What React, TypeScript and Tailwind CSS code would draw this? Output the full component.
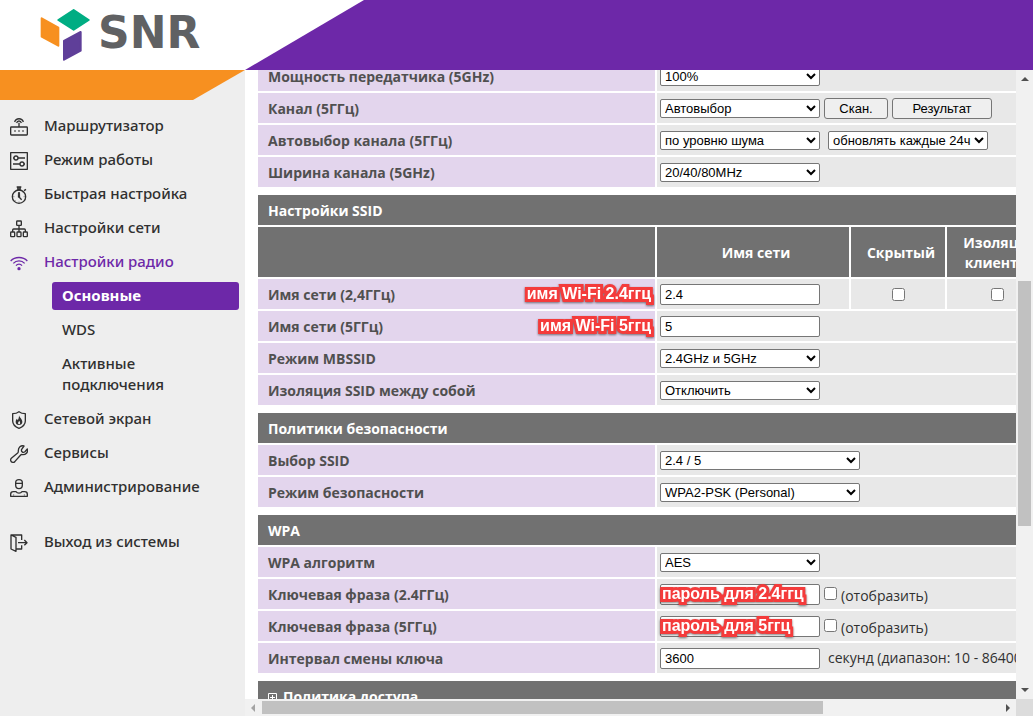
import { ReactNode, useState } from "react";

const icons: Record<string, ReactNode> = {
  router: (
    <>
      <rect x="2" y="27" width="50" height="24" rx="2" />
      <path d="M27 27V14M14 12C18 -1 36 -1 40 12M20 15c2-8 12-8 14 0" />
      <path d="M13 39h4M25 39h4M37 39h4" strokeWidth="5" />
    </>
  ),
  mode: (
    <>
      <rect x="2" y="2" width="50" height="50" />
      <circle cx="18" cy="18" r="6" />
      <circle cx="36" cy="36" r="6" />
      <path d="M24 18h21M9 36h21M9 18h3M42 36h3" />
    </>
  ),
  timer: (
    <>
      <circle cx="27" cy="32" r="20" />
      <path d="M20 3h14M24 3v8h6V3" strokeWidth="5" />
      <path d="M42 14l6-4M27 18v15l8 8" />
      <path d="M27 47v3M10 32h3M41 32h3M14 19l2 2M14 45l2-2M40 19l-2 2" strokeWidth="2" />
      <path d="M25 20h4l1 14h-6z" fill="currentColor" strokeWidth="1" />
    </>
  ),
  network: (
    <>
      <rect x="20" y="3" width="14" height="13" rx="2" />
      <rect x="2" y="36" width="12" height="14" rx="2" />
      <rect x="21" y="36" width="12" height="14" rx="2" />
      <rect x="40" y="36" width="12" height="14" rx="2" />
      <path d="M27 16v20M8 36v-6q0-3 3-3h32q3 0 3 3v6" />
    </>
  ),
  wifi: (
    <>
      <path d="M2 21C15 7 39 7 52 21M10 28c9-10 25-10 34 0M18 35c5-6 13-6 18 0" />
      <circle cx="27" cy="44" r="3" fill="currentColor" />
    </>
  ),
  firewall: (
    <>
      <path d="M27 2c5 4 12 6 19 6v22c0 11-9 18-19 22C17 48 8 41 8 30V8c7 0 14-2 19-6z" />
      <path
        d="M27 13c1 7 10 11 10 20 0 6-4 9-10 9s-10-3-10-9c0-5 2-8 4-10l2 5c3-4 4-9 4-15zm1 16c-5 5-5 9-1 11 5-1 4-6 1-11z"
        fill="currentColor"
        fillRule="evenodd"
        stroke="none"
      />
    </>
  ),
  wrench: (
    <path d="M42 3C33 0 24 7 25 19c0 2 0 3-2 5L4 40c-4 4-2 11 4 12 3 1 6-1 7-3l17-19c1-1 3-2 5-1 10 1 18-7 15-17l-8 9c-2 1-6 1-8-1-2-1-2-5-1-7z" />
  ),
  admin: (
    <>
      <path d="M17 11c0-5 4-9 10-9s10 4 10 9v7c0 6-4 11-10 11s-10-5-10-11zM17 13h20" />
      <path d="M2 52v-6c0-5 3-8 8-8h8c4 6 14 6 18 0h8c5 0 8 3 8 8v6z" />
      <path d="M11 46v4M43 46v4" strokeWidth="2" />
    </>
  ),
  exit: (
    <>
      <path d="M3 3h32v15M35 34v11H20M3 3l15 7v42L3 45z" />
      <path d="M24 26h26M43 18l8 8-8 8" />
    </>
  ),
};

function MenuIcon({ name }: { name: string }) {
  return (
    <svg
      viewBox="0 0 54 54"
      className="mt-0.5 size-[18px] shrink-0"
      fill="none"
      stroke="currentColor"
      strokeWidth="4"
      strokeLinejoin="round"
      aria-hidden="true"
    >
      {icons[name]}
    </svg>
  );
}

function MenuItem({ icon, label, active }: { icon: string; label: string; active?: boolean }) {
  return (
    <a
      href="#"
      className={`flex h-[34px] items-center gap-4 pl-2.5 ${active ? "text-[#6d28a8]" : "text-[#303030]"}`}
    >
      <MenuIcon name={icon} />
      <span>{label}</span>
    </a>
  );
}

function Logo() {
  return (
    <a href="#" aria-label="SNR" className="flex h-full w-[245px] shrink-0 items-center gap-2 pl-10">
      <svg viewBox="0 0 150 156" className="h-[52px] w-[50px]" strokeWidth="6" strokeLinejoin="round">
        <path d="M5 28l50 28v54L5 83z" fill="#f79020" stroke="#f79020" />
        <path d="M101 3l45 30-45 29-46-29z" fill="#00ad83" stroke="#00ad83" />
        <path d="M72 96l50-27v56l-50 27z" fill="#5f3f99" stroke="#5f3f99" />
      </svg>
      <span className="pb-1 font-['DejaVu_Sans',sans-serif] text-[44px] leading-none font-bold text-[#606163]">
        SNR
      </span>
    </a>
  );
}

const controlFont = "font-['Liberation_Sans',Arial,sans-serif] text-[13px] text-black";

function Select({ id, label, value, wide }: { id: string; label?: string; value: string; wide?: boolean }) {
  return (
    <select
      id={id}
      aria-label={label}
      className={`block h-[19px] rounded-[2px] border border-[#767676] bg-white ${controlFont} ${wide ? "w-[200px]" : "w-40"}`}
    >
      <option>{value}</option>
    </select>
  );
}

function TextInput({ id, initial = "" }: { id: string; initial?: string }) {
  const [value, setValue] = useState(initial);
  return (
    <input
      id={id}
      type="text"
      value={value}
      onChange={(e) => setValue(e.target.value)}
      className={`block h-[21px] w-40 rounded-[2px] border border-[#767676] bg-white px-1 ${controlFont}`}
    />
  );
}

function Button({ children, className }: { children: ReactNode; className: string }) {
  return (
    <button
      type="button"
      className={`h-[21px] rounded-[3px] border border-[#767676] bg-[#efefef] pt-px leading-4 ${controlFont} ${className}`}
    >
      {children}
    </button>
  );
}

const noteStyle =
  "font-['Liberation_Sans',Arial,sans-serif] text-base leading-5 font-bold whitespace-nowrap text-white [-webkit-text-stroke:6px_#f43b3b] [paint-order:stroke_fill] drop-shadow-[0_1px_1px_#00000080]";

function Table({ children }: { children: ReactNode }) {
  return (
    <table className="mb-1 w-[1003px] table-fixed border-separate border-spacing-0.5 text-left">
      <colgroup>
        <col className="w-[397px]" />
        <col className="w-48" />
        <col className="w-[94px]" />
        <col className="w-[100px]" />
        <col />
      </colgroup>
      <tbody>{children}</tbody>
    </table>
  );
}

function Section({ children }: { children: ReactNode }) {
  return (
    <tr>
      <th colSpan={5} className="h-[30px] bg-[#717171] px-2.5 pt-0.5 pb-0 text-white">
        {children}
      </th>
    </tr>
  );
}

interface RowProps {
  id: string;
  label: string;
  note?: string;
  span?: number;
  after?: ReactNode;
  children: ReactNode;
}

function Row({ id, label, note, span = 4, after, children }: RowProps) {
  return (
    <tr>
      <th scope="row" className="h-[30px] bg-[#e3d5ed] py-0 pr-1 pl-2.5 text-[#505050]">
        <div className="flex items-center justify-between">
          <label htmlFor={id} className="pt-0.5">{label}</label>
          {note && <span className={noteStyle}>{note}</span>}
        </div>
      </th>
      <td colSpan={span} className="h-[30px] bg-[#e8e8e8] px-[3px] py-0">
        <div className="flex items-center">{children}</div>
      </td>
      {after}
    </tr>
  );
}

function CheckCell({ label }: { label: string }) {
  return (
    <td className="bg-[#e8e8e8] p-0">
      <input type="checkbox" aria-label={label} className="mx-auto block size-[13px]" />
    </td>
  );
}

function Passphrase({ id, note }: { id: string; note: string }) {
  return (
    <>
      <div className="relative">
        <TextInput id={id} />
        <span className={`pointer-events-none absolute top-0 left-0.5 ${noteStyle}`}>{note}</span>
      </div>
      <label className="ml-1 flex items-center gap-1 font-normal">
        <input type="checkbox" className="mb-0.5 size-[13px]" />
        <span className="pt-1">(отобразить)</span>
      </label>
    </>
  );
}

const headCell = "h-[50px] bg-[#717171] pt-0.5 pr-0 pb-0 pl-1.5 text-center leading-5 text-white";

function Arrow({ className }: { className: string }) {
  return (
    <svg viewBox="0 0 8 8" className={`size-2 shrink-0 ${className}`} aria-hidden="true">
      <path d="M0 6l4-4 4 4z" fill="currentColor" />
    </svg>
  );
}

function Sidebar() {
  return (
    <aside className="w-[245px] shrink-0 bg-[#eeeeee]">
      <div className="h-[30px] bg-[#f79020] [clip-path:polygon(0_0,100%_0,193px_100%,0_100%)]" />
      <nav className="pt-[9px] font-['Noto_Sans','Open_Sans',sans-serif] text-[15px] font-medium">
        <MenuItem icon="router" label="Маршрутизатор" />
        <MenuItem icon="mode" label="Режим работы" />
        <MenuItem icon="timer" label="Быстрая настройка" />
        <MenuItem icon="network" label="Настройки сети" />
        <MenuItem icon="wifi" label="Настройки радио" active />
        <div className="mr-1.5 ml-[52px] leading-[21px] text-[#303030]">
          <a href="#" className="my-[3px] flex h-7 items-center rounded-[3px] bg-[#6d28a8] px-2.5 pb-0.5 font-bold text-white">
            Основные
          </a>
          <a href="#" className="flex h-[34px] items-center px-2.5 pb-0.5">WDS</a>
          <a href="#" className="flex h-[55px] items-center px-2.5 pb-0.5">Активные подключения</a>
        </div>
        <MenuItem icon="firewall" label="Сетевой экран" />
        <MenuItem icon="wrench" label="Сервисы" />
        <MenuItem icon="admin" label="Администрирование" />
        <div className="pt-[21px]">
          <MenuItem icon="exit" label="Выход из системы" />
        </div>
      </nav>
    </aside>
  );
}

export default function App() {
  return (
    <div className="flex h-screen flex-col overflow-hidden bg-white font-['Open_Sans','Noto_Sans',sans-serif] text-sm text-[#303030]">
      <header className="flex h-[70px] shrink-0">
        <Logo />
        <div className="grow bg-[#6d28a8] [clip-path:polygon(119px_0,100%_0,100%_100%,0_100%)]" />
      </header>

      <div className="flex min-h-0 grow">
        <Sidebar />

        <div className="flex min-w-0 grow flex-col">
          <div className="flex min-h-0 grow">
            <main className="min-w-0 grow overflow-hidden pl-[11px]">
              <div className="-mt-[11px]">
                <Table>
                  <Row id="power" label="Мощность передатчика (5GHz)">
                    <Select id="power" value="100%" />
                  </Row>
                  <Row id="channel" label="Канал (5ГГц)">
                    <Select id="channel" value="Автовыбор" />
                    <Button className="ml-1 w-16">Скан.</Button>
                    <Button className="ml-1 w-[100px]">Результат</Button>
                  </Row>
                  <Row id="auto" label="Автовыбор канала (5ГГц)">
                    <div className="flex gap-2">
                      <Select id="auto" value="по уровню шума" />
                      <Select id="refresh" label="Период обновления" value="обновлять каждые 24ч" />
                    </div>
                  </Row>
                  <Row id="width" label="Ширина канала (5GHz)">
                    <Select id="width" value="20/40/80MHz" />
                  </Row>
                </Table>

                <Table>
                  <Section>Настройки SSID</Section>
                  <tr>
                    <td className={headCell} />
                    <th className={headCell}>Имя сети</th>
                    <th className={headCell}>Скрытый</th>
                    <th className={headCell}>Изоляция клиентов</th>
                    <td className={headCell} />
                  </tr>
                  <Row
                    id="ssid24"
                    label="Имя сети (2,4ГГц)"
                    note="имя Wi-Fi 2.4ггц"
                    span={1}
                    after={
                      <>
                        <CheckCell label="Скрытый" />
                        <CheckCell label="Изоляция клиентов" />
                        <td className="bg-[#e8e8e8]" />
                      </>
                    }
                  >
                    <TextInput id="ssid24" initial="2.4" />
                  </Row>
                  <Row id="ssid5" label="Имя сети (5ГГц)" note="имя Wi-Fi 5ггц">
                    <TextInput id="ssid5" initial="5" />
                  </Row>
                  <Row id="mbssid" label="Режим MBSSID">
                    <Select id="mbssid" value="2.4GHz и 5GHz" />
                  </Row>
                  <Row id="isolation" label="Изоляция SSID между собой">
                    <Select id="isolation" value="Отключить" />
                  </Row>
                </Table>

                <Table>
                  <Section>Политики безопасности</Section>
                  <Row id="ssid" label="Выбор SSID">
                    <Select id="ssid" value="2.4 / 5" wide />
                  </Row>
                  <Row id="security" label="Режим безопасности">
                    <Select id="security" value="WPA2-PSK (Personal)" wide />
                  </Row>
                </Table>

                <Table>
                  <Section>WPA</Section>
                  <Row id="cipher" label="WPA алгоритм">
                    <Select id="cipher" value="AES" />
                  </Row>
                  <Row id="key24" label="Ключевая фраза (2.4ГГц)">
                    <Passphrase id="key24" note="пароль для 2.4ггц" />
                  </Row>
                  <Row id="key5" label="Ключевая фраза (5ГГц)">
                    <Passphrase id="key5" note="пароль для 5ггц" />
                  </Row>
                  <Row id="rekey" label="Интервал смены ключа">
                    <TextInput id="rekey" initial="3600" />
                    <span className="ml-2">секунд (диапазон: 10 - 86400)</span>
                  </Row>
                </Table>

                <Table>
                  <Section>
                    <span className="flex items-center gap-1.5">
                      <svg viewBox="0 0 9 9" className="size-[9px]" fill="none" stroke="white" aria-hidden="true">
                        <path d="M.5.5h8v8h-8zM2 4.500h5M4.500 2v5" />
                      </svg>
                      Политика доступа
                    </span>
                  </Section>
                </Table>
              </div>
            </main>

            <div className="flex w-[17px] shrink-0 flex-col items-center bg-[#f1f1f1] text-[#505050]">
              <Arrow className="mt-[5px]" />
              <div className="flex w-[13px] grow flex-col pt-[198px]">
                <div className="h-[245px] bg-[#c1c1c1]" />
              </div>
              <Arrow className="mb-[5px] rotate-180" />
            </div>
          </div>

          <div className="flex h-[17px] shrink-0 bg-[#f1f1f1] text-[#505050]">
            <div className="flex grow items-center pr-1">
              <Arrow className="mx-1 -rotate-90 text-[#a3a3a3]" />
              <div className="flex h-[13px] grow pl-px">
                <div className="w-[561px] bg-[#c1c1c1]" />
              </div>
              <Arrow className="rotate-90" />
            </div>
            <div className="w-[17px] bg-[#dcdcdc]" />
          </div>
        </div>
      </div>
    </div>
  );
}
